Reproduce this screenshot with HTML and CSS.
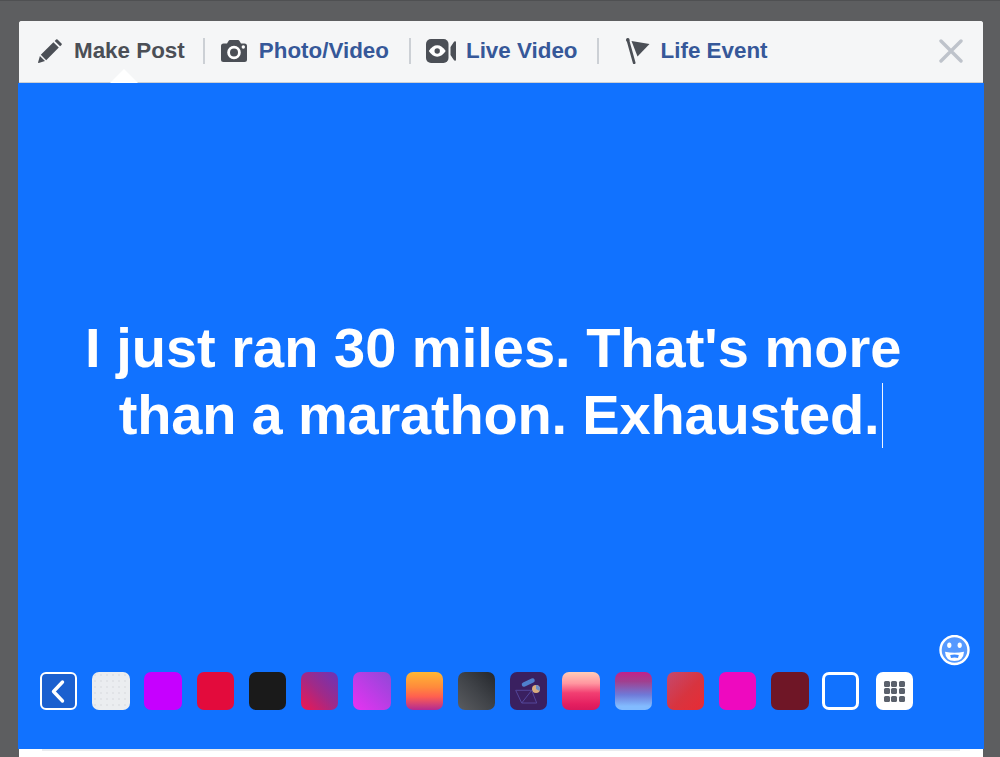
FILE: index.html
```html
<!DOCTYPE html>
<html lang="en">
<head>
<meta charset="utf-8">
<title>Make Post</title>
<link rel="stylesheet" href="styles.css">
</head>
<body>
<main class="dialog">
  <header class="tabs">
    <div class="tab tab-post">
      <svg class="icon" width="24" height="24" viewBox="0 0 24 24"><path d="M2.800 15.800 15.400 3.200l5.400 5.400L8.200 21.200zM16.700 1.900 18.100.5a1 1 0 0 1 1.400 0l4 4a1 1 0 0 1 0 1.400l-1.400 1.400zM1.900 17l5.100 5.100-6.300 1.800a.5.500 0 0 1-.6-.6z"/></svg>
      <span class="label-current">Make Post</span>
      <span class="notch"></span>
    </div>
    <span class="sep"></span>
    <div class="tab tab-photo">
      <svg class="icon" width="26" height="22" viewBox="0 0 26 22"><path d="M2.500 3.500H6L7.500 1Q8 0 9 0h8q1 0 1.500 1L20 3.500h3.500Q26 3.500 26 6v13.500q0 2.500-2.500 2.500h-21Q0 22 0 19.500V6q0-2.500 2.500-2.500z"/><circle cx="13" cy="12.500" r="5.400" fill="none" stroke="#fff" stroke-width="2.800"/><circle cx="22.300" cy="7" r="1.700" fill="#fff"/></svg>
      <span class="label">Photo/Video</span>
    </div>
    <span class="sep"></span>
    <div class="tab tab-live">
      <svg class="icon" width="30" height="24" viewBox="0 0 30 24"><rect width="22.500" height="24" rx="5"/><path d="M24.500 8 27.500 3.500q.8-1.200 1.700-1.200.8 0 .8 1.200v17q0 1.200-.8 1.200-.9 0-1.700-1.200L24.500 16z"/><path d="M2.800 12Q6.500 6.300 11.200 6.300T19.700 12Q16 17.700 11.200 17.700T2.800 12z" fill="#fff"/><circle cx="11.200" cy="12" r="2.700"/></svg>
      <span class="label">Live Video</span>
    </div>
    <span class="sep"></span>
    <div class="tab tab-event">
      <svg class="icon" width="24" height="26" viewBox="0 0 24 26"><path d="M1.800 1.800 8.200 24.800" fill="none" stroke="#4b4f56" stroke-width="2.700" stroke-linecap="round"/><circle cx="1.800" cy="1.900" r="1.800"/><path d="M5.500 3 23.500 6 11.500 18.500z"/></svg>
      <span class="label">Life Event</span>
    </div>
    <svg class="close" width="24" height="24" viewBox="0 0 24 24"><path d="M2 2 22 22M22 2 2 22" fill="none" stroke="#bec3cb" stroke-width="3.400" stroke-linecap="round"/></svg>
  </header>

  <section class="canvas">
    <p class="message">I just ran 30 miles. That's more<span class="hang"></span> <span class="line-two">than a marathon. Exhausted.</span><span class="caret"></span></p>
    <svg class="emoji" width="31" height="31" viewBox="0 0 31 31">
      <circle cx="15.500" cy="15" r="14" fill="#5599ff" stroke="#fff" stroke-width="2.400"/>
      <ellipse cx="10.300" cy="10.300" rx="2.100" ry="2.700" fill="#fff"/>
      <ellipse cx="20.700" cy="10.300" rx="2.100" ry="2.700" fill="#fff"/>
      <path d="M6 16.800Q15.500 18.800 25 16.800 24.500 26 15.500 26T6 16.800z" fill="#fff"/>
      <path d="M11.200 20Q15.500 18.800 19.800 20L19 23Q15.500 21.800 12 23z" fill="#3f8cff"/>
    </svg>
    <div class="swatches">
      <button class="swatch back" type="button"><svg width="33" height="33" viewBox="0 0 33 33"><path d="M20.500 7 11.500 16.500 20.500 26" fill="none" stroke="#fff" stroke-width="3.400" stroke-linecap="round" stroke-linejoin="round"/></svg></button>
      <span class="swatch s-dots"></span>
      <span class="swatch s-violet"></span>
      <span class="swatch s-red"></span>
      <span class="swatch s-black"></span>
      <span class="swatch s-berry"></span>
      <span class="swatch s-orchid"></span>
      <span class="swatch s-sunset"></span>
      <span class="swatch s-slate"></span>
      <span class="swatch s-space"><svg width="37" height="37" viewBox="0 0 37 37"><path d="M14 12.500 22.500 8.500" fill="none" stroke="#4f80cc" stroke-width="4.500" stroke-linecap="round"/><circle cx="26" cy="17" r="4" fill="#d9ad7f"/><path d="M26 13a4 4 0 0 1 3.500 6L26 17z" fill="#6e90c8"/><path d="M5.700 18.300H21.700L26.700 31H11.700zM21.700 18.300 11.700 31" fill="none" stroke="#54479a" stroke-width="1"/></svg></span>
      <span class="swatch s-candy"></span>
      <span class="swatch s-dusk"></span>
      <span class="swatch s-coral"></span>
      <span class="swatch s-magenta"></span>
      <span class="swatch s-wine"></span>
      <span class="swatch s-empty"></span>
      <span class="swatch s-grid"><span class="dots"><i></i><i></i><i></i><i></i><i></i><i></i><i></i><i></i><i></i></span></span>
    </div>
  </section>
  <footer class="foot"></footer>
</main>
</body>
</html>
```
FILE: styles.css
```css
* { box-sizing: border-box; }
html, body { height: 100%; margin: 0; overflow: hidden; }
body {
  background: #5d5e60;
  border-top: 1px solid #4f5052;
  padding: 20px 17px 0 19px;
  font-family: "Liberation Sans", Arial, sans-serif;
}
.dialog { width: 964px; background: #fff; border-radius: 3px 3px 0 0; }
.tabs {
  height: 62px;
  display: flex;
  align-items: center;
  background: #f5f6f7;
  border-bottom: 1px solid #ccd0d5;
  border-radius: 3px 3px 0 0;
  padding-bottom: 1px;
}
.tab { position: relative; display: flex; align-items: center; font-size: 22.400px; font-weight: 700; }
.tab-post { padding-left: 19px; gap: 12px; padding-right: 18px; }
.tab-photo { padding-left: 16px; gap: 12px; padding-right: 20px; }
.tab-live { padding-left: 15px; gap: 10px; padding-right: 19px; }
.tab-event { padding-left: 27px; gap: 11px; }
.icon { display: block; fill: #4b4f56; flex: none; }
.label-current { color: #4b4f56; }
.label { color: #365899; }
.sep { width: 2px; height: 26px; background: #ccd0d5; flex: none; }
.notch {
  position: absolute;
  left: 91px;
  top: 31px;
  width: 0;
  height: 0;
  border-left: 14px solid transparent;
  border-right: 14px solid transparent;
  border-bottom: 14px solid #fff;
}
.close { margin-left: auto; margin-right: 20px; display: block; }
.canvas {
  width: 966px;
  height: 666px;
  margin-left: -1px;
  background: #1172ff;
  display: flex;
  flex-direction: column;
  padding: 231px 0 39.300px;
  position: relative;
}
.message {
  margin: 0;
  padding: 0 50px;
  color: #fff;
  font-size: 56px;
  line-height: 67px;
  font-weight: 700;
  text-align: center;
  font-kerning: none;
}
.hang { display: inline-block; width: 15.600px; }
.line-two { letter-spacing: -0.180px; }
.caret {
  display: inline-block;
  width: 1px;
  height: 65px;
  margin: -20px 0 -20px 3px;
  vertical-align: 6px;
  background: #f0f5ff;
}
.emoji { display: block; align-self: flex-end; margin: auto 14px 6.300px 0; }
.swatches { display: flex; align-items: center; gap: 14.940px; padding-left: 22px; }
.swatch { width: 37.300px; height: 37.300px; border-radius: 7px; flex: none; display: block; overflow: hidden; }
.swatch svg { display: block; }
.back { padding: 0; background: #1b60cf; border: 2px solid #fff; border-radius: 6px; }
.s-dots {
  background-color: #ebedf0;
  background-image: radial-gradient(#e0e2e6 0.7px, transparent 0.8px);
  background-size: 6px 6px;
}
.s-violet { background: #c600ff; }
.s-red { background: #e30b3c; }
.s-black { background: #1a1a1a; }
.s-berry { background: linear-gradient(to top right, #f01650, #a02a88 50%, #6a35b8); }
.s-orchid { background: linear-gradient(to top right, #e832f2, #8f48d8); }
.s-sunset { background: linear-gradient(#ffb734, #ff8a3c 40%, #ff5f50 65%, #b22a94); }
.s-slate { background: linear-gradient(to top right, #5a5c60, #404348 50%, #24272c); }
.s-space { background: #3a2060; }
.s-candy { background: linear-gradient(#ffcdb8, #ff96a0 30%, #f23f72 55%, #e41f60 85%, #d8195c); }
.s-dusk { background: linear-gradient(#c2218a, #a0408f 25%, #6f7ad8 60%, #82bbff 90%); }
.s-coral { background: linear-gradient(to bottom right, #c4496e, #d8343f 55%, #e82b34); }
.s-magenta { background: #ee09bf; }
.s-wine { background: #6f1626; }
.s-empty { border: 3px solid #fff; margin: 0 1.500px 0 -1.500px; }
.s-grid { background: #fff; display: flex; align-items: center; justify-content: center; }
.dots { display: grid; grid-template-columns: repeat(3, 6px); grid-auto-rows: 6px; gap: 1.500px; }
.dots i { background: #5b616b; border-radius: 1.500px; }
.foot { height: 8px; margin: 0 23px; border-top: 2px solid #e9ebee; }
```
